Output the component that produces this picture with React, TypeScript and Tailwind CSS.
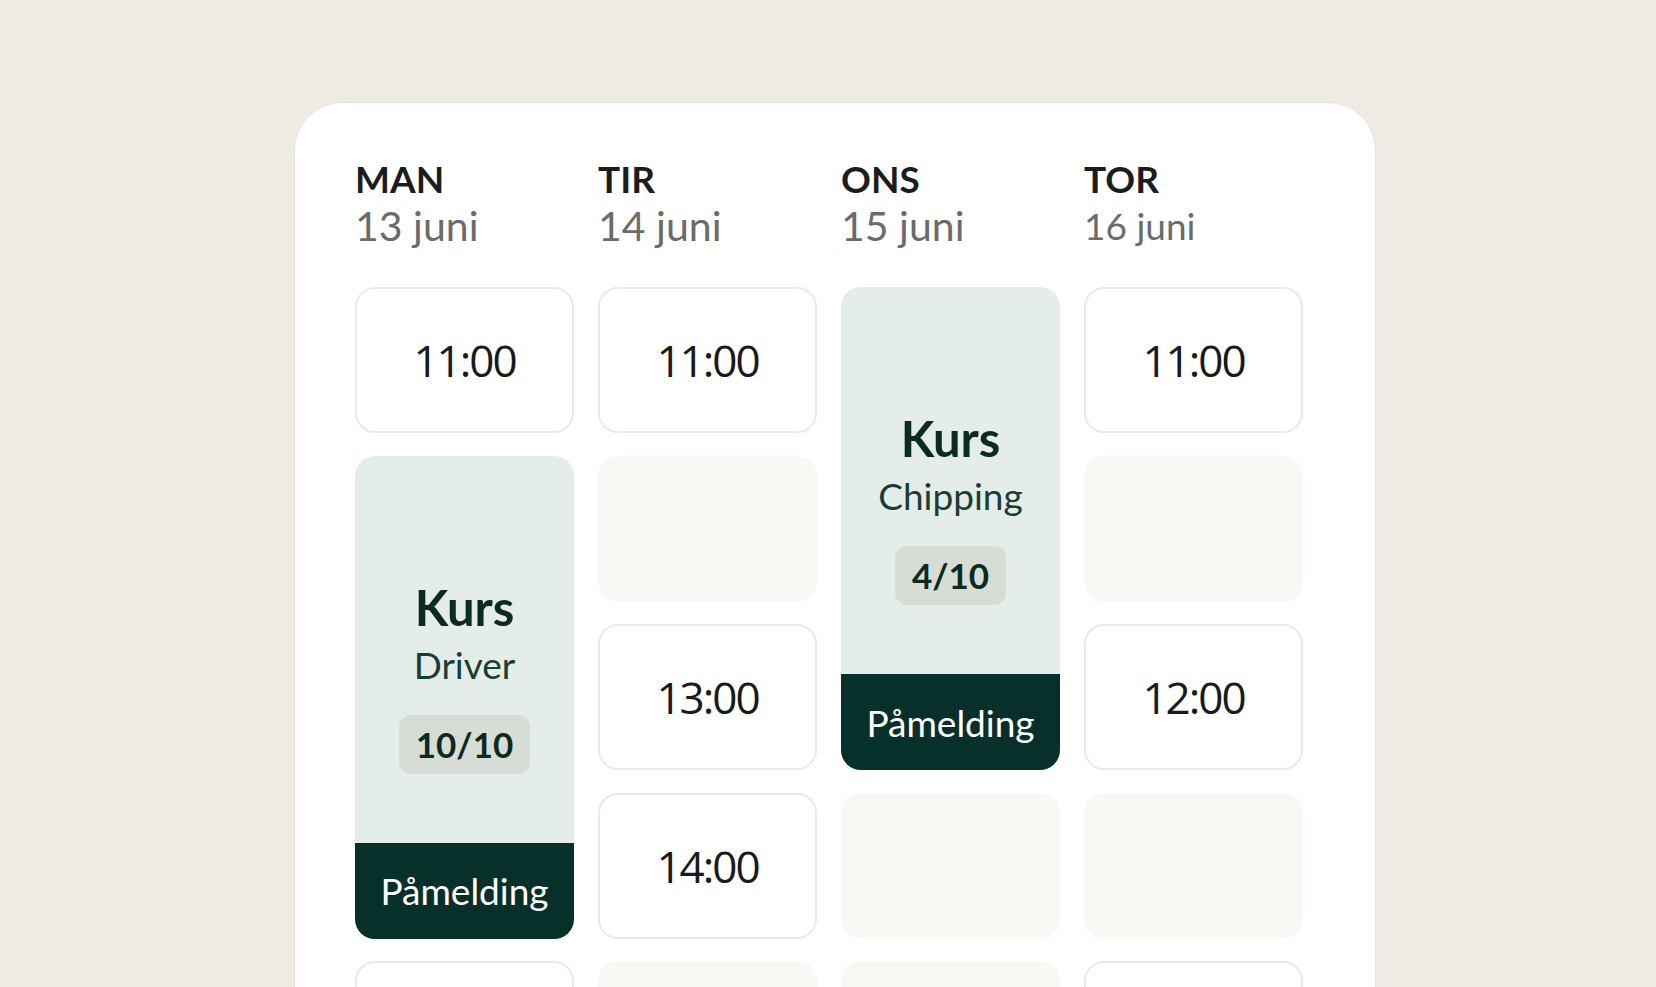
import React from "react";

const lato = "font-['Lato',sans-serif]";

function TimeSlot({ t, cls }: { t: string; cls: string }) {
  return (
    <div
      className={`${cls} flex items-center justify-center rounded-[20px] border-2 border-[#eaeaea] bg-white font-['Open_Sans',sans-serif] text-[44px] tracking-[-2px] text-[#1a1a1a]`}
    >
      {t}
    </div>
  );
}

function Empty({ cls }: { cls: string }) {
  return <div className={`${cls} rounded-[20px] bg-[#f9f8f5]`} />;
}

function Course({ name, count, cls }: { name: string; count: string; cls: string }) {
  return (
    <div className={`${cls} flex flex-col overflow-hidden rounded-[20px] bg-[#e5edea] ${lato}`}>
      <div className="flex flex-1 flex-col items-center pt-[127px]">
        <div className="text-[49px] font-bold leading-none text-[#0b2a20]">Kurs</div>
        <div className="mt-[14px] text-[37px] leading-none text-[#1b3d31]">{name}</div>
        <div className="mt-[32px] flex h-[59px] items-center rounded-[12px] bg-[#d7ddd5] px-[17px] text-[35px] font-bold leading-none text-[#0b2a20]">
          {count}
        </div>
      </div>
      <div className="flex h-[96px] items-center justify-center bg-[#08302a] text-[37px] leading-none text-white">
        Påmelding
      </div>
    </div>
  );
}

export default function App() {
  const days = [
    { d: "MAN", date: "13 juni", small: false },
    { d: "TIR", date: "14 juni", small: false },
    { d: "ONS", date: "15 juni", small: false },
    { d: "TOR", date: "16 juni", small: true },
  ];
  return (
    <div className="h-screen w-full overflow-hidden bg-[#efebe4]">
      <div className="ml-[294px] mt-[102px] w-[1082px] rounded-[48px] border border-[#e6e2da] bg-white pl-[60px] pt-[57px] pb-[60px]">
        <div className={`grid grid-cols-[219px_219px_219px_219px] gap-x-[24px] ${lato}`}>
          {days.map((x) => (
            <div key={x.d}>
              <div className="text-[37px] font-bold leading-none text-[#1c1c1c]">{x.d}</div>
              <div
                className={
                  x.small
                    ? "mt-[10px] text-[37px] leading-none text-[#6b6b6b]"
                    : "mt-[8px] text-[41px] leading-none text-[#6b6b6b]"
                }
              >
                {x.date}
              </div>
            </div>
          ))}
        </div>
        <div className="mt-[41px] grid grid-cols-[219px_219px_219px_219px] grid-rows-[146px_146px_146px_146px_146px] gap-x-[24px] gap-y-[22.5px]">
          <TimeSlot t="11:00" cls="col-start-1 row-start-1" />
          <Course name="Driver" count="10/10" cls="col-start-1 row-start-2 row-span-3" />
          <TimeSlot t="" cls="col-start-1 row-start-5" />

          <TimeSlot t="11:00" cls="col-start-2 row-start-1" />
          <Empty cls="col-start-2 row-start-2" />
          <TimeSlot t="13:00" cls="col-start-2 row-start-3" />
          <TimeSlot t="14:00" cls="col-start-2 row-start-4" />
          <Empty cls="col-start-2 row-start-5" />

          <Course name="Chipping" count="4/10" cls="col-start-3 row-start-1 row-span-3" />
          <Empty cls="col-start-3 row-start-4" />
          <Empty cls="col-start-3 row-start-5" />

          <TimeSlot t="11:00" cls="col-start-4 row-start-1" />
          <Empty cls="col-start-4 row-start-2" />
          <TimeSlot t="12:00" cls="col-start-4 row-start-3" />
          <Empty cls="col-start-4 row-start-4" />
          <TimeSlot t="" cls="col-start-4 row-start-5" />
        </div>
      </div>
    </div>
  );
}
